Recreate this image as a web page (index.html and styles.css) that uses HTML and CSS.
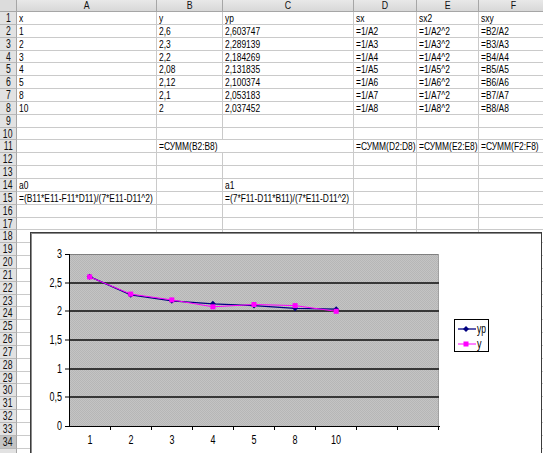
FILE: index.html
```html
<!DOCTYPE html>
<html>
<head>
<meta charset="utf-8">
<link rel="stylesheet" href="styles.css">
</head>
<body>
<div class="sheet">
  <div class="corner"></div><div class="ch"><span>A</span></div><div class="ch"><span>B</span></div><div class="ch"><span>C</span></div><div class="ch"><span>D</span></div><div class="ch"><span>E</span></div><div class="ch"><span>F</span></div>

  <div class="rh"><span>1</span></div><div class="c"><span>x</span></div><div class="c"><span>y</span></div><div class="c"><span>yp</span></div><div class="c"><span>sx</span></div><div class="c"><span>sx2</span></div><div class="c"><span>sxy</span></div>
  <div class="rh"><span>2</span></div><div class="c"><span>1</span></div><div class="c"><span>2,6</span></div><div class="c"><span>2,603747</span></div><div class="c"><span>=1/A2</span></div><div class="c"><span>=1/A2^2</span></div><div class="c"><span>=B2/A2</span></div>
  <div class="rh"><span>3</span></div><div class="c"><span>2</span></div><div class="c"><span>2,3</span></div><div class="c"><span>2,289139</span></div><div class="c"><span>=1/A3</span></div><div class="c"><span>=1/A3^2</span></div><div class="c"><span>=B3/A3</span></div>
  <div class="rh"><span>4</span></div><div class="c"><span>3</span></div><div class="c"><span>2,2</span></div><div class="c"><span>2,184269</span></div><div class="c"><span>=1/A4</span></div><div class="c"><span>=1/A4^2</span></div><div class="c"><span>=B4/A4</span></div>
  <div class="rh"><span>5</span></div><div class="c"><span>4</span></div><div class="c"><span>2,08</span></div><div class="c"><span>2,131835</span></div><div class="c"><span>=1/A5</span></div><div class="c"><span>=1/A5^2</span></div><div class="c"><span>=B5/A5</span></div>
  <div class="rh"><span>6</span></div><div class="c"><span>5</span></div><div class="c"><span>2,12</span></div><div class="c"><span>2,100374</span></div><div class="c"><span>=1/A6</span></div><div class="c"><span>=1/A6^2</span></div><div class="c"><span>=B6/A6</span></div>
  <div class="rh"><span>7</span></div><div class="c"><span>8</span></div><div class="c"><span>2,1</span></div><div class="c"><span>2,053183</span></div><div class="c"><span>=1/A7</span></div><div class="c"><span>=1/A7^2</span></div><div class="c"><span>=B7/A7</span></div>
  <div class="rh"><span>8</span></div><div class="c"><span>10</span></div><div class="c"><span>2</span></div><div class="c"><span>2,037452</span></div><div class="c"><span>=1/A8</span></div><div class="c"><span>=1/A8^2</span></div><div class="c"><span>=B8/A8</span></div>
  <div class="rh"><span>9</span></div><div class="c"></div><div class="c"></div><div class="c"></div><div class="c"></div><div class="c"></div><div class="c"></div>
  <div class="rh"><span>10</span></div><div class="c"></div><div class="c"></div><div class="c"></div><div class="c"></div><div class="c"></div><div class="c"></div>
  <div class="rh"><span>11</span></div><div class="c"></div><div class="c span2"><span>=СУММ(B2:B8)</span></div><div class="c"><span>=СУММ(D2:D8)</span></div><div class="c"><span>=СУММ(E2:E8)</span></div><div class="c"><span>=СУММ(F2:F8)</span></div>
  <div class="rh"><span>12</span></div><div class="c"></div><div class="c"></div><div class="c"></div><div class="c"></div><div class="c"></div><div class="c"></div>
  <div class="rh"><span>13</span></div><div class="c"></div><div class="c"></div><div class="c"></div><div class="c"></div><div class="c"></div><div class="c"></div>
  <div class="rh"><span>14</span></div><div class="c"><span>a0</span></div><div class="c"></div><div class="c"><span>a1</span></div><div class="c"></div><div class="c"></div><div class="c"></div>
  <div class="rh"><span>15</span></div><div class="c"><span>=(B11*E11-F11*D11)/(7*E11-D11^2)</span></div><div class="c"></div><div class="c"><span>=(7*F11-D11*B11)/(7*E11-D11^2)</span></div><div class="c"></div><div class="c"></div><div class="c"></div>
  <div class="rh"><span>16</span></div><div class="c"></div><div class="c"></div><div class="c"></div><div class="c"></div><div class="c"></div><div class="c"></div>
  <div class="rh"><span>17</span></div><div class="c"></div><div class="c"></div><div class="c"></div><div class="c"></div><div class="c"></div><div class="c"></div>
  <div class="rh"><span>18</span></div><div class="c"></div><div class="c"></div><div class="c"></div><div class="c"></div><div class="c"></div><div class="c"></div>
  <div class="rh"><span>19</span></div><div class="c"></div><div class="c"></div><div class="c"></div><div class="c"></div><div class="c"></div><div class="c"></div>
  <div class="rh"><span>20</span></div><div class="c"></div><div class="c"></div><div class="c"></div><div class="c"></div><div class="c"></div><div class="c"></div>
  <div class="rh"><span>21</span></div><div class="c"></div><div class="c"></div><div class="c"></div><div class="c"></div><div class="c"></div><div class="c"></div>
  <div class="rh"><span>22</span></div><div class="c"></div><div class="c"></div><div class="c"></div><div class="c"></div><div class="c"></div><div class="c"></div>
  <div class="rh"><span>23</span></div><div class="c"></div><div class="c"></div><div class="c"></div><div class="c"></div><div class="c"></div><div class="c"></div>
  <div class="rh"><span>24</span></div><div class="c"></div><div class="c"></div><div class="c"></div><div class="c"></div><div class="c"></div><div class="c"></div>
  <div class="rh"><span>25</span></div><div class="c"></div><div class="c"></div><div class="c"></div><div class="c"></div><div class="c"></div><div class="c"></div>
  <div class="rh"><span>26</span></div><div class="c"></div><div class="c"></div><div class="c"></div><div class="c"></div><div class="c"></div><div class="c"></div>
  <div class="rh"><span>27</span></div><div class="c"></div><div class="c"></div><div class="c"></div><div class="c"></div><div class="c"></div><div class="c"></div>
  <div class="rh"><span>28</span></div><div class="c"></div><div class="c"></div><div class="c"></div><div class="c"></div><div class="c"></div><div class="c"></div>
  <div class="rh"><span>29</span></div><div class="c"></div><div class="c"></div><div class="c"></div><div class="c"></div><div class="c"></div><div class="c"></div>
  <div class="rh"><span>30</span></div><div class="c"></div><div class="c"></div><div class="c"></div><div class="c"></div><div class="c"></div><div class="c"></div>
  <div class="rh"><span>31</span></div><div class="c"></div><div class="c"></div><div class="c"></div><div class="c"></div><div class="c"></div><div class="c"></div>
  <div class="rh"><span>32</span></div><div class="c"></div><div class="c"></div><div class="c"></div><div class="c"></div><div class="c"></div><div class="c"></div>
  <div class="rh"><span>33</span></div><div class="c"></div><div class="c"></div><div class="c"></div><div class="c"></div><div class="c"></div><div class="c"></div>
  <div class="rh sel"><span>34</span></div><div class="c"></div><div class="c"></div><div class="c"></div><div class="c"></div><div class="c"></div><div class="c"></div>
  <div class="rh"></div><div class="c"></div><div class="c"></div><div class="c"></div><div class="c"></div><div class="c"></div><div class="c"></div>
</div>

<div class="chart">
  <svg class="plot" width="520" height="230" viewBox="0 0 520 230" xmlns="http://www.w3.org/2000/svg">
    <defs>
      <pattern id="dither" width="2" height="2" patternUnits="userSpaceOnUse">
        <rect width="2" height="2" fill="#c4c4c4"/>
        <rect width="1" height="1" fill="#b6b6b6"/>
        <rect x="1" y="1" width="1" height="1" fill="#b6b6b6"/>
      </pattern>
    </defs>
    <g transform="translate(-31,-233)">
      <rect x="69" y="254" width="370" height="172" fill="url(#dither)"/>
      <line x1="69" y1="254.5" x2="439" y2="254.5" stroke="#808080" stroke-width="1"/>
      <line x1="438.5" y1="254" x2="438.5" y2="426" stroke="#a0a0a0" stroke-width="1"/>
      <g stroke="#383838" stroke-width="2">
        <line x1="69" y1="283" x2="439" y2="283"/>
        <line x1="69" y1="311" x2="439" y2="311"/>
        <line x1="69" y1="340" x2="439" y2="340"/>
        <line x1="69" y1="369" x2="439" y2="369"/>
        <line x1="69" y1="397" x2="439" y2="397"/>
      </g>
      <g stroke="#000" stroke-width="1">
        <line x1="69.5" y1="254" x2="69.5" y2="427"/>
        <line x1="69" y1="426.5" x2="440" y2="426.5"/>
        <line x1="65" y1="254.5" x2="69" y2="254.5"/>
        <line x1="65" y1="283" x2="69" y2="283"/>
        <line x1="65" y1="311" x2="69" y2="311"/>
        <line x1="65" y1="340" x2="69" y2="340"/>
        <line x1="65" y1="369" x2="69" y2="369"/>
        <line x1="65" y1="397" x2="69" y2="397"/>
        <line x1="65" y1="426.5" x2="69" y2="426.5"/>
        <line x1="110.5" y1="426" x2="110.5" y2="430"/>
        <line x1="151.5" y1="426" x2="151.5" y2="430"/>
        <line x1="192.5" y1="426" x2="192.5" y2="430"/>
        <line x1="233.5" y1="426" x2="233.5" y2="430"/>
        <line x1="274.5" y1="426" x2="274.5" y2="430"/>
        <line x1="315.5" y1="426" x2="315.5" y2="430"/>
        <line x1="356.5" y1="426" x2="356.5" y2="430"/>
        <line x1="397.5" y1="426" x2="397.5" y2="430"/>
        <line x1="438.5" y1="426" x2="438.5" y2="430"/>
      </g>
      <g class="axis" text-anchor="end">
        <text x="62" y="258" textLength="5" lengthAdjust="spacingAndGlyphs">3</text>
        <text x="62" y="287" textLength="12.5" lengthAdjust="spacingAndGlyphs">2,5</text>
        <text x="62" y="315" textLength="5" lengthAdjust="spacingAndGlyphs">2</text>
        <text x="62" y="344" textLength="12.5" lengthAdjust="spacingAndGlyphs">1,5</text>
        <text x="62" y="373" textLength="5" lengthAdjust="spacingAndGlyphs">1</text>
        <text x="62" y="401" textLength="12.5" lengthAdjust="spacingAndGlyphs">0,5</text>
        <text x="62" y="430" textLength="5" lengthAdjust="spacingAndGlyphs">0</text>
      </g>
      <g class="axis" text-anchor="middle">
        <text x="90" y="444" textLength="5" lengthAdjust="spacingAndGlyphs">1</text>
        <text x="131" y="444" textLength="5" lengthAdjust="spacingAndGlyphs">2</text>
        <text x="172" y="444" textLength="5" lengthAdjust="spacingAndGlyphs">3</text>
        <text x="213" y="444" textLength="5" lengthAdjust="spacingAndGlyphs">4</text>
        <text x="254" y="444" textLength="5" lengthAdjust="spacingAndGlyphs">5</text>
        <text x="295" y="444" textLength="5" lengthAdjust="spacingAndGlyphs">8</text>
        <text x="336" y="444" textLength="10" lengthAdjust="spacingAndGlyphs">10</text>
      </g>
      <polyline fill="none" stroke="#000080" stroke-width="1.3" points="89.6,276.7 130.7,294.8 171.8,300.8 212.9,303.8 254,305.6 295.1,308.3 336.2,309.2"/>
      <g fill="#000080">
        <polygon points="89.6,273.7 92.6,276.7 89.6,279.7 86.6,276.7"/>
        <polygon points="130.7,291.8 133.7,294.8 130.7,297.8 127.7,294.8"/>
        <polygon points="171.8,297.8 174.8,300.8 171.8,303.8 168.8,300.8"/>
        <polygon points="212.9,300.8 215.9,303.8 212.9,306.8 209.9,303.8"/>
        <polygon points="254,302.6 257,305.6 254,308.6 251,305.6"/>
        <polygon points="295.1,305.3 298.1,308.3 295.1,311.3 292.1,308.3"/>
        <polygon points="336.2,306.2 339.2,309.2 336.2,312.2 333.2,309.2"/>
      </g>
      <polyline fill="none" stroke="#ff00ff" stroke-width="1" points="89.6,276.9 130.7,294.1 171.8,299.9 212.9,306.8 254,304.5 295.1,305.6 336.2,311.3"/>
      <g fill="#ff00ff">
        <rect x="87.1" y="274.4" width="5" height="5"/>
        <rect x="128.2" y="291.6" width="5" height="5"/>
        <rect x="169.3" y="297.4" width="5" height="5"/>
        <rect x="210.4" y="304.3" width="5" height="5"/>
        <rect x="251.5" y="302" width="5" height="5"/>
        <rect x="292.6" y="303.1" width="5" height="5"/>
        <rect x="333.7" y="308.8" width="5" height="5"/>
      </g>
      <rect x="454.5" y="319.5" width="34" height="32" fill="#fff" stroke="#000" stroke-width="1"/>
      <line x1="458" y1="329" x2="476" y2="329" stroke="#000080" stroke-width="1.3"/>
      <polygon points="466,326 469,329 466,332 463,329" fill="#000080"/>
      <line x1="458" y1="344" x2="476" y2="344" stroke="#ff00ff" stroke-width="1"/>
      <rect x="463.5" y="341.5" width="5" height="5" fill="#ff00ff"/>
      <text class="legend" x="477" y="333" textLength="9" lengthAdjust="spacingAndGlyphs">yp</text>
      <text class="legend" x="477" y="348" textLength="4.5" lengthAdjust="spacingAndGlyphs">y</text>
    </g>
  </svg>
</div>
</body>
</html>
```
FILE: styles.css
```css
html, body {
  margin: 0;
  padding: 0;
  background: #fff;
  overflow: hidden;
}
body {
  width: 543px;
  height: 453px;
  position: relative;
  font-family: "Liberation Sans", Arial, sans-serif;
  font-size: 11px;
  color: #000;
}
.sheet {
  display: grid;
  grid-template-columns: 17px 140px 66px 131px 63px 62px 70px;
  grid-template-rows: 12px;
  grid-auto-rows: 12.85px;
  width: 549px;
}
.sheet > div {
  box-sizing: border-box;
  white-space: nowrap;
  overflow: visible;
}
.sheet span {
  display: inline-block;
  transform: scaleX(0.765);
}
.corner {
  background: #dcdcdc;
  border-right: 1px solid #a6a6a6;
  border-bottom: 1px solid #a6a6a6;
}
.ch {
  background: linear-gradient(#e8e8e8, #d8d8d8);
  border-right: 1px solid #a6a6a6;
  border-bottom: 1px solid #a6a6a6;
  text-align: center;
  line-height: 11px;
  color: #111;
}
.ch span {
  transform: scaleX(0.8);
  transform-origin: 50% 50%;
}
.rh {
  background: #e2e2e2;
  border-right: 1px solid #a6a6a6;
  border-bottom: 1px solid #b8b8b8;
  text-align: center;
  line-height: 12px;
  font-size: 12px;
  color: #111;
}
.rh span {
  transform: scaleX(0.72);
  transform-origin: 50% 50%;
}
.rh.sel {
  background: #c4c4c4;
}
.c {
  border-right: 1px solid #cacaca;
  border-bottom: 1px solid #cacaca;
  padding-left: 2px;
  line-height: 12px;
}
.c span {
  transform-origin: 0 50%;
}
.span2 {
  grid-column: span 2;
}
.chart {
  position: absolute;
  left: 30px;
  top: 232px;
  width: 510px;
  height: 240px;
  background: #fff;
  border: 1px solid #3c3c3c;
  box-shadow: inset 1px 1px 0 #8a8a8a;
}
.plot {
  display: block;
}
.axis {
  font-family: "Liberation Sans", Arial, sans-serif;
  font-size: 12px;
  fill: #000;
}
.legend {
  font-family: "Liberation Sans", Arial, sans-serif;
  font-size: 12px;
  fill: #000;
}
```
